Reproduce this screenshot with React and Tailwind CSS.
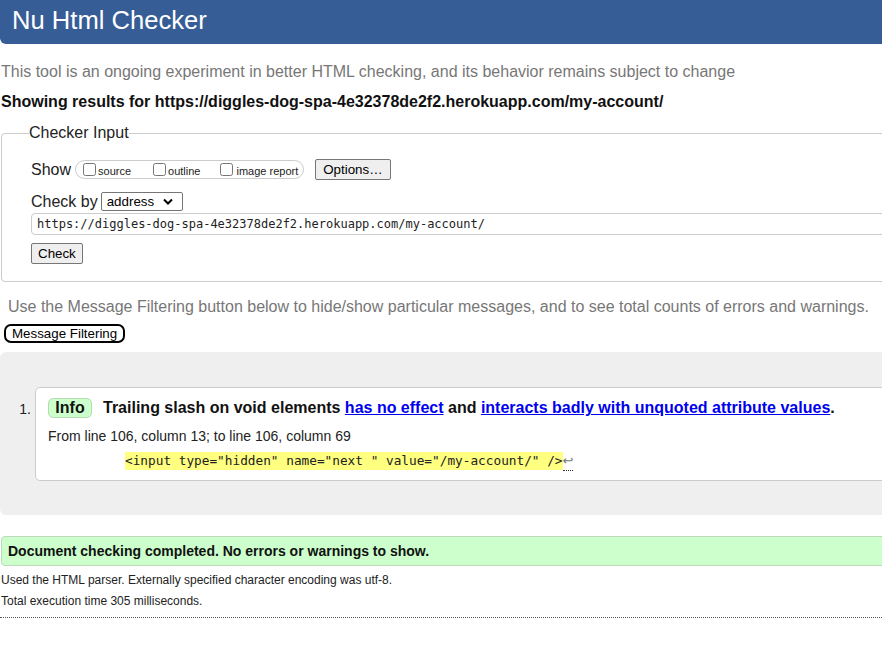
export default function App() {
  return (
    <div className="w-[882px] h-[651px] overflow-hidden bg-white font-['Liberation_Sans',Arial,sans-serif] text-[#1a1a1a]">
      <div className="w-[1000px]">
        {/* Header */}
        <div className="h-[44px] bg-[#365d95] rounded-bl-[6px] pl-[12px] pt-[5px]">
          <h1 className="text-[25.6px] leading-[30px] text-white font-normal">Nu Html Checker</h1>
        </div>

        <p className="mt-[19px] text-[16px] leading-[18px] text-[#777] pl-[1px]">
          This tool is an ongoing experiment in better HTML checking, and its behavior remains subject to change
        </p>
        <p className="mt-[12px] text-[16px] leading-[18px] font-bold text-[#111] pl-[1px]">
          Showing results for https://diggles-dog-spa-4e32378de2f2.herokuapp.com/my-account/
        </p>

        {/* Checker Input fieldset */}
        <fieldset className="mt-[13px] ml-[1px] border border-[#ccc] rounded-[4px] pl-[29px] pt-[17px] pb-[17px]">
          <legend className="ml-[-2px] px-0 text-[16px] leading-[18px] text-[#222]">Checker Input</legend>

          <div className="flex items-center h-[21px]">
            <span className="text-[16px] leading-[18px] text-[#222]">Show</span>
            <div className="ml-[4px] flex items-center h-[19px] border border-[#ccc] rounded-full pl-[7px] pr-[5px]">
              <input type="checkbox" readOnly className="w-[13px] h-[13px] m-0 mb-[1px]" />
              <span className="ml-[2px] mt-[3px] text-[11px] leading-[13px] text-[#222]">source</span>
              <input type="checkbox" readOnly className="ml-[22px] w-[13px] h-[13px] m-0 mb-[1px]" />
              <span className="ml-[2px] mt-[3px] text-[11px] leading-[13px] text-[#222]">outline</span>
              <input type="checkbox" readOnly className="ml-[20px] w-[13px] h-[13px] m-0 mb-[1px]" />
              <span className="ml-[3px] mt-[3px] text-[11px] leading-[13px] text-[#222]">image report</span>
            </div>
            <button className="ml-[11px] h-[21px] px-[7px] bg-[#efefef] border border-[#767676] rounded-[2px] text-[13.33px] leading-[15px] text-black">
              Options…
            </button>
          </div>

          <div className="mt-[12px] flex items-center h-[19px]">
            <span className="text-[16px] leading-[18px] text-[#222]">Check by</span>
            <div className="ml-[3px] w-[82px] h-[19px] border border-[#767676] rounded-[2px] flex items-center justify-between pl-[5px] pr-[9px] bg-white">
              <span className="text-[13.33px] leading-[15px] text-black">address</span>
              <svg width="10" height="7" viewBox="0 0 10 7">
                <path d="M1 1.5 L5 5.5 L9 1.5" fill="none" stroke="#000" strokeWidth="2" />
              </svg>
            </div>
          </div>

          <div className="mt-[2px] h-[22px] border border-[#ccc] rounded-[4px] flex items-center pl-[5px]">
            <span className="font-['DejaVu_Sans_Mono',monospace] text-[12px] leading-[14px] text-[#222]">
              https://diggles-dog-spa-4e32378de2f2.herokuapp.com/my-account/
            </span>
          </div>

          <button className="mt-[8px] h-[21px] px-[6px] bg-[#efefef] border border-[#767676] rounded-[2px] text-[13.33px] leading-[15px] text-black block">
            Check
          </button>
        </fieldset>

        <p className="mt-[16px] ml-[8px] text-[16px] leading-[18px] text-[#777]">
          Use the Message Filtering button below to hide/show particular messages, and to see total counts of errors and warnings.
        </p>
        <button className="mt-[8px] ml-[4px] h-[19px] px-[6px] border-2 border-black rounded-[7px] bg-white text-[13.33px] leading-[15px] text-black block">
          Message Filtering
        </button>

        {/* Results */}
        <div className="mt-[9px] bg-[#efefef] rounded-l-[6px] pt-[35px] pb-[34px]">
          <div className="flex">
            <div className="w-[35px] shrink-0 pr-[4px] text-right text-[14px] leading-[18px] mt-[13px] text-[#222]">1.</div>
            <div className="flex-1 bg-white border border-[#ccc] rounded-l-[5px] pl-[12px] pt-[10px] pb-[10px]">
              <div className="flex items-center h-[20px]">
                <span className="h-[20px] w-[44px] flex items-center justify-center bg-[#ccffcc] border border-[#b5dcb5] rounded-[5px] text-[16px] font-bold leading-[18px] text-[#111]">
                  Info
                </span>
                <span className="ml-[11px] text-[16px] font-bold leading-[20px] text-[#111]">
                  Trailing slash on void elements{" "}
                  <a className="text-[#0000ee] underline">has no effect</a> and{" "}
                  <a className="text-[#0000ee] underline">interacts badly with unquoted attribute values</a>.
                </span>
              </div>
              <p className="mt-[9px] text-[14px] leading-[18px] text-[#222]">
                From line 106, column 13; to line 106, column 69
              </p>
              <p className="mt-[7px] pl-[77px] flex items-start h-[18px]">
                <code className="font-['DejaVu_Sans_Mono',monospace] text-[12.75px] leading-[18px] bg-[#ffff80] text-[#222] whitespace-pre">
                  {'<input type="hidden" name="next " value="/my-account/" />'}
                </code>
                <span className="font-['DejaVu_Sans',sans-serif] text-[13px] leading-[18px] text-[#777] border-b border-dotted border-[#333]">
                  ↩
                </span>
              </p>
            </div>
          </div>
        </div>

        <div className="mt-[21px] ml-[1px] h-[30px] bg-[#ccffcc] border border-[#bcd9bc] rounded-l-[4px] pl-[6px] flex items-center">
          <span className="text-[14px] font-bold leading-[18px] text-[#111]">
            Document checking completed. No errors or warnings to show.
          </span>
        </div>

        <p className="mt-[7px] pl-[1px] text-[12px] leading-[14px] text-[#222]">
          Used the HTML parser. Externally specified character encoding was utf-8.
        </p>
        <p className="mt-[7px] pl-[1px] text-[12px] leading-[14px] text-[#222]">
          Total execution time 305 milliseconds.
        </p>
        <div className="mt-[9px] border-t border-dotted border-[#555]"></div>
      </div>
    </div>
  );
}
